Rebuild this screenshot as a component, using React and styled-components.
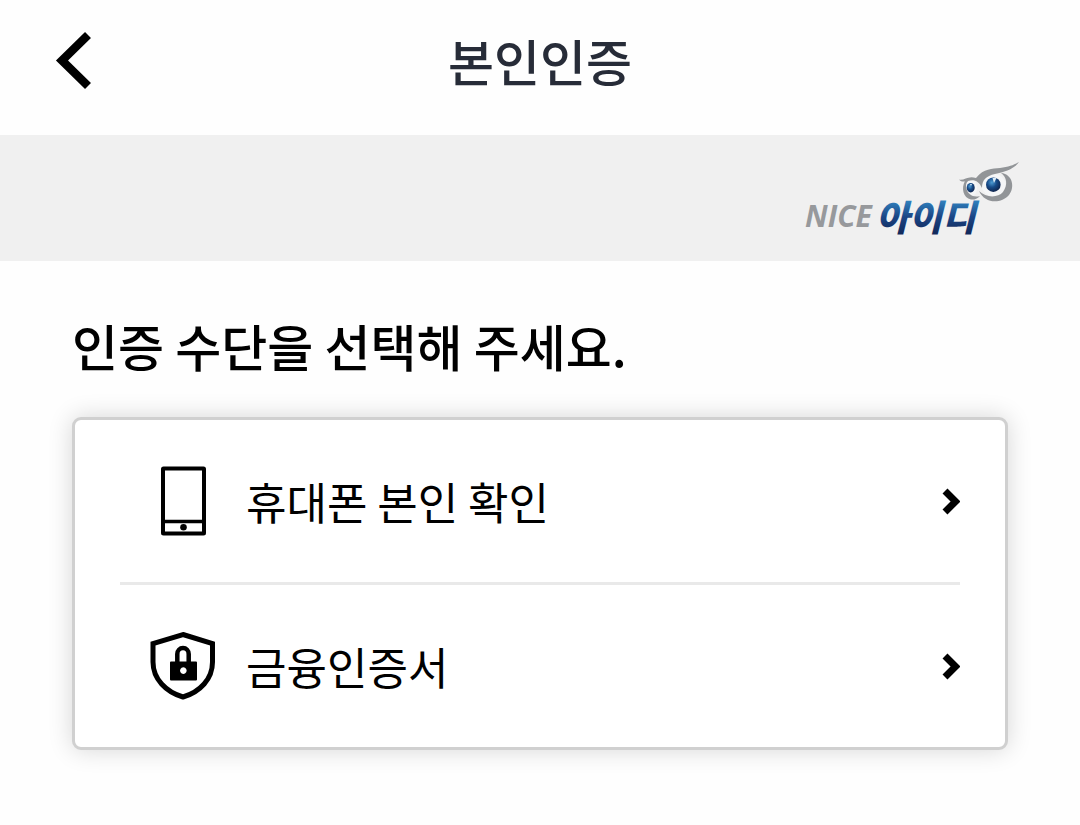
import React from "react";
import styled, { createGlobalStyle } from "styled-components";

const GlobalStyle = createGlobalStyle`
  * { box-sizing: border-box; }
  body {
    margin: 0;
    background: #fefefe;
    color: #000;
    font-family: "Noto Sans CJK KR", "Noto Sans", sans-serif;
  }
`;

const Header = styled.header`
  display: grid;
  grid-template-columns: 1fr auto 1fr;
  align-items: center;
  height: 135px;
  padding: 0 54px 16px;
`;

const BackButton = styled.button`
  display: flex;
  justify-self: start;
  padding: 0;
  border: 0;
  background: none;
  cursor: pointer;
`;

const Title = styled.h1`
  margin: 0;
  font-size: 50px;
  line-height: 72px;
  font-weight: 500;
  color: #272c38;
`;

const BrandBar = styled.div`
  display: flex;
  align-items: center;
  justify-content: flex-end;
  height: 126px;
  padding: 0 59px;
  background: #f0f0f0;
`;

const Main = styled.main`
  padding: 48px 72px;
`;

const Prompt = styled.h2`
  margin: 0 0 36px;
  font-size: 50px;
  line-height: 72px;
  font-weight: 500;
`;

const MethodList = styled.ul`
  margin: 0;
  padding: 0 45px;
  list-style: none;
  background: #fff;
  border: 3px solid #d0d0d0;
  border-radius: 9px;
  box-shadow: 0 0 24px rgba(0, 0, 0, 0.16);
`;

const MethodItem = styled.li`
  & + & { border-top: 3px solid #e9e9e9; }
`;

const MethodButton = styled.button`
  display: flex;
  align-items: center;
  width: 100%;
  height: 162px;
  padding: 0 0 0 27px;
  border: 0;
  background: none;
  color: inherit;
  font: inherit;
  font-size: 44px;
  line-height: 60px;
  text-align: left;
  cursor: pointer;
`;

const Label = styled.span`
  flex: 1;
  margin-left: 27px;
`;

function BackIcon() {
  return (
    <svg width="40" height="60" viewBox="0 0 40 60" aria-hidden="true">
      <path d="M34 5 8 30.500 34 56" fill="none" stroke="#000" strokeWidth="8.500" />
    </svg>
  );
}

function PhoneIcon() {
  return (
    <svg width="72" height="72" viewBox="0 0 72 72" aria-hidden="true">
      <rect x="16" y="3.500" width="41" height="65" rx="0.500" fill="none" stroke="#000" strokeWidth="4" />
      <path d="M16 56.500h41" stroke="#000" strokeWidth="3.500" />
      <circle cx="36.500" cy="62.300" r="3.300" />
    </svg>
  );
}

function ShieldIcon() {
  return (
    <svg width="72" height="72" viewBox="0 0 72 72" aria-hidden="true">
      <path
        d="M36 4.500 65.500 13.500V32C65.500 49 53 62 36 67 19 62 6 49 6 32V13.500Z"
        fill="none"
        stroke="#000"
        strokeWidth="5"
      />
      <path d="M30.300 33V24a5.700 6 0 0 1 11.400 0V33" fill="none" stroke="#000" strokeWidth="4.500" />
      <path
        fillRule="evenodd"
        d="M24 31.500h25q1 0 1 1v17q0 1-1 1H24q-1 0-1-1v-17q0-1 1-1Zm12.300 5.800a3.300 3.300 0 1 0 .1 0Z"
      />
    </svg>
  );
}

function ChevronIcon() {
  return (
    <svg width="18" height="30" viewBox="0 0 18 30" aria-hidden="true">
      <path d="M3 5 13.500 15.500 3 26" fill="none" stroke="#000" strokeWidth="7" />
    </svg>
  );
}

function BrandLogo() {
  return (
    <svg width="216" height="86" viewBox="0 -6 216 86" role="img" aria-label="NICE 아이디">
      <defs>
        <linearGradient id="ink" gradientUnits="userSpaceOnUse" x1="0" y1="40" x2="0" y2="72">
          <stop offset="0" stopColor="#2f80bd" />
          <stop offset="0.500" stopColor="#1b4585" />
          <stop offset="1" stopColor="#122a5c" />
        </linearGradient>
        <radialGradient id="iris" cx="0.400" cy="0.350" r="0.650">
          <stop offset="0" stopColor="#4e9cd3" />
          <stop offset="0.500" stopColor="#174b88" />
          <stop offset="1" stopColor="#10264f" />
        </radialGradient>
      </defs>
      <text x="0" y="66" fill="#97999c" fontFamily="'Open Sans', sans-serif" fontSize="30" fontWeight="700" fontStyle="italic">NICE</text>
      <text x="71" y="70" fill="url(#ink)" fontFamily="'Noto Sans CJK KR', sans-serif" fontSize="36" fontWeight="900" fontStyle="italic">아이디</text>
      <ellipse cx="188.500" cy="24" rx="12" ry="11" fill="#f5f6f7" />
      <ellipse cx="166" cy="27" rx="6" ry="8" fill="#f5f6f7" />
      <g fill="#929598">
        <path d="M154 18.500C159 20 163 14 171 17C179 7 187 8 195 7C204 6 209 4 214 1C208 9 199 11 190 13C181 15 177 19 177 27C174 20 169 18 163 20C159 21 156 21 154 18.500Z" />
        <path d="M196 12C208 13 210 27 204 34C196 43 180 43 174 30C181 37 193 37 198 31C203 24 202 16 196 12Z" />
        <path d="M160 20C156 27 158 37 166 38.500C169 39 172 38 175 35C168 37 163 33 161.500 28C160.500 24 161 22 163 20Z" />
      </g>
      <circle cx="188.300" cy="23.700" r="7.300" fill="url(#iris)" />
      <ellipse cx="165.700" cy="26.700" rx="4" ry="4.800" fill="url(#iris)" />
      <path d="M187.500 17h4l-2.500 5Z" fill="#dcecf7" />
      <path d="M165 23h2l-1 2Z" fill="#dcecf7" />
    </svg>
  );
}

const METHODS = [
  { label: "휴대폰 본인 확인", Icon: PhoneIcon },
  { label: "금융인증서", Icon: ShieldIcon },
];

export default function App() {
  return (
    <>
      <GlobalStyle />
      <Header>
        <BackButton type="button" aria-label="뒤로">
          <BackIcon />
        </BackButton>
        <Title>본인인증</Title>
      </Header>
      <BrandBar>
        <BrandLogo />
      </BrandBar>
      <Main>
        <Prompt>인증 수단을 선택해 주세요.</Prompt>
        <MethodList>
          {METHODS.map(({ label, Icon }) => (
            <MethodItem key={label}>
              <MethodButton type="button">
                <Icon />
                <Label>{label}</Label>
                <ChevronIcon />
              </MethodButton>
            </MethodItem>
          ))}
        </MethodList>
      </Main>
    </>
  );
}
